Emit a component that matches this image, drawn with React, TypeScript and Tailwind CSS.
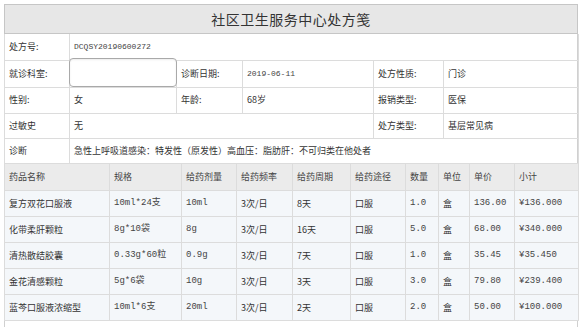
import React from 'react';

const cn = "font-['Noto_Sans_CJK_SC',sans-serif]";
const mono = "font-['Liberation_Mono','Noto_Sans_CJK_SC',monospace]";

const drugs = [
    { name: '复方双花口服液', spec: '10ml*24支', dose: '10ml', freq: '3次/日', days: '8天', route: '口服', qty: '1.0', unit: '盒', price: '136.00', total: '¥136.000' },
    { name: '化带柔肝颗粒', spec: '8g*10袋', dose: '8g', freq: '3次/日', days: '16天', route: '口服', qty: '5.0', unit: '盒', price: '68.00', total: '¥340.000' },
    { name: '清热散结胶囊', spec: '0.33g*60粒', dose: '0.9g', freq: '3次/日', days: '7天', route: '口服', qty: '1.0', unit: '盒', price: '35.45', total: '¥35.450' },
    { name: '金花清感颗粒', spec: '5g*6袋', dose: '10g', freq: '3次/日', days: '3天', route: '口服', qty: '3.0', unit: '盒', price: '79.80', total: '¥239.400' },
    { name: '蓝芩口服液浓缩型', spec: '10ml*6支', dose: '20ml', freq: '3次/日', days: '2天', route: '口服', qty: '2.0', unit: '盒', price: '50.00', total: '¥100.000' },
];

// base cell: border + padding only, size/colour set per cell
const cell = 'border border-[#dcdcdc] px-[4px] whitespace-nowrap overflow-hidden';
const txt = `${cell} text-[9px] text-[#333]`;
const num = `${cell} text-[8px] text-[#444] ${mono}`;
const numT = `${cell} text-[9px] text-[#444] ${mono}`;

export default function App() {
    return (
        <div className={`w-[580px] h-[327px] bg-white overflow-hidden pt-[4px] pl-[4px] ${cn}`}>
            <div className="w-[574px] h-[323px] border-l border-r border-[#d0d0d0]">
                {/* Title */}
                <div className="h-[30px] -mx-px border border-[#c6c6c6] bg-[#e7e7e7] flex items-center justify-center text-[14px] text-[#333] tracking-[0.5px]">
                    社区卫生服务中心处方笺
                </div>

                {/* Info */}
                <table className="w-[574px] table-fixed border-collapse -mx-px">
                    <colgroup>
                        <col className="w-[65px]" />
                        <col className="w-[107px]" />
                        <col className="w-[66px]" />
                        <col className="w-[131px]" />
                        <col className="w-[70px]" />
                        <col className="w-[135px]" />
                    </colgroup>
                    <tbody>
                        <tr className="h-[26px]">
                            <td className={`${txt} border-t-0`}>处方号:</td>
                            <td className={`${num} border-t-0`} colSpan={5}>DCQSY20190600272</td>
                        </tr>
                        <tr className="h-[27px]">
                            <td className={txt}>就诊科室:</td>
                            <td className={`${cell} relative overflow-visible`}>
                                <div className="absolute left-[-1px] top-[-3px] w-[108px] h-[29px] rounded-[4px] border border-[#a9a9a9] bg-white shadow-[inset_0_1px_2px_rgba(0,0,0,0.08)]" />
                            </td>
                            <td className={txt}>诊断日期:</td>
                            <td className={num}>2019-06-11</td>
                            <td className={txt}>处方性质:</td>
                            <td className={txt}>门诊</td>
                        </tr>
                        <tr className="h-[26px]">
                            <td className={txt}>性别:</td>
                            <td className={txt}>女</td>
                            <td className={txt}>年龄:</td>
                            <td className={txt}>68岁</td>
                            <td className={txt}>报销类型:</td>
                            <td className={txt}>医保</td>
                        </tr>
                        <tr className="h-[25px]">
                            <td className={txt}>过敏史</td>
                            <td className={txt} colSpan={3}>无</td>
                            <td className={txt}>处方类型:</td>
                            <td className={txt}>基层常见病</td>
                        </tr>
                        <tr className="h-[25px]">
                            <td className={txt}>诊断</td>
                            <td className={txt} colSpan={5}>急性上呼吸道感染：特发性（原发性）高血压：脂肪肝：不可归类在他处者</td>
                        </tr>
                    </tbody>
                </table>

                {/* Drugs */}
                <table className="w-[574px] table-fixed border-collapse -mx-px">
                    <colgroup>
                        <col className="w-[105px]" />
                        <col className="w-[72px]" />
                        <col className="w-[55px]" />
                        <col className="w-[56px]" />
                        <col className="w-[58px]" />
                        <col className="w-[55px]" />
                        <col className="w-[33px]" />
                        <col className="w-[31px]" />
                        <col className="w-[45px]" />
                        <col className="w-[64px]" />
                    </colgroup>
                    <thead>
                        <tr className="h-[27px] bg-[#ebebeb]">
                            {['药品名称', '规格', '给药剂量', '给药频率', '给药周期', '给药途径', '数量', '单位', '单价', '小计'].map(h => (
                                <th key={h} className={`${cell} border-t-0 font-normal text-left text-[9px] text-[#444]`}>{h}</th>
                            ))}
                        </tr>
                    </thead>
                    <tbody>
                        {drugs.map(d => (
                            <tr key={d.name} className="h-[26px] bg-[#f4f7fa]">
                                <td className={txt}>{d.name}</td>
                                <td className={numT}>{d.spec}</td>
                                <td className={numT}>{d.dose}</td>
                                <td className={txt}>{d.freq}</td>
                                <td className={txt}>{d.days}</td>
                                <td className={txt}>{d.route}</td>
                                <td className={numT}>{d.qty}</td>
                                <td className={txt}>{d.unit}</td>
                                <td className={numT}>{d.price}</td>
                                <td className={numT}>{d.total}</td>
                            </tr>
                        ))}
                    </tbody>
                </table>
            </div>
        </div>
    );
}
